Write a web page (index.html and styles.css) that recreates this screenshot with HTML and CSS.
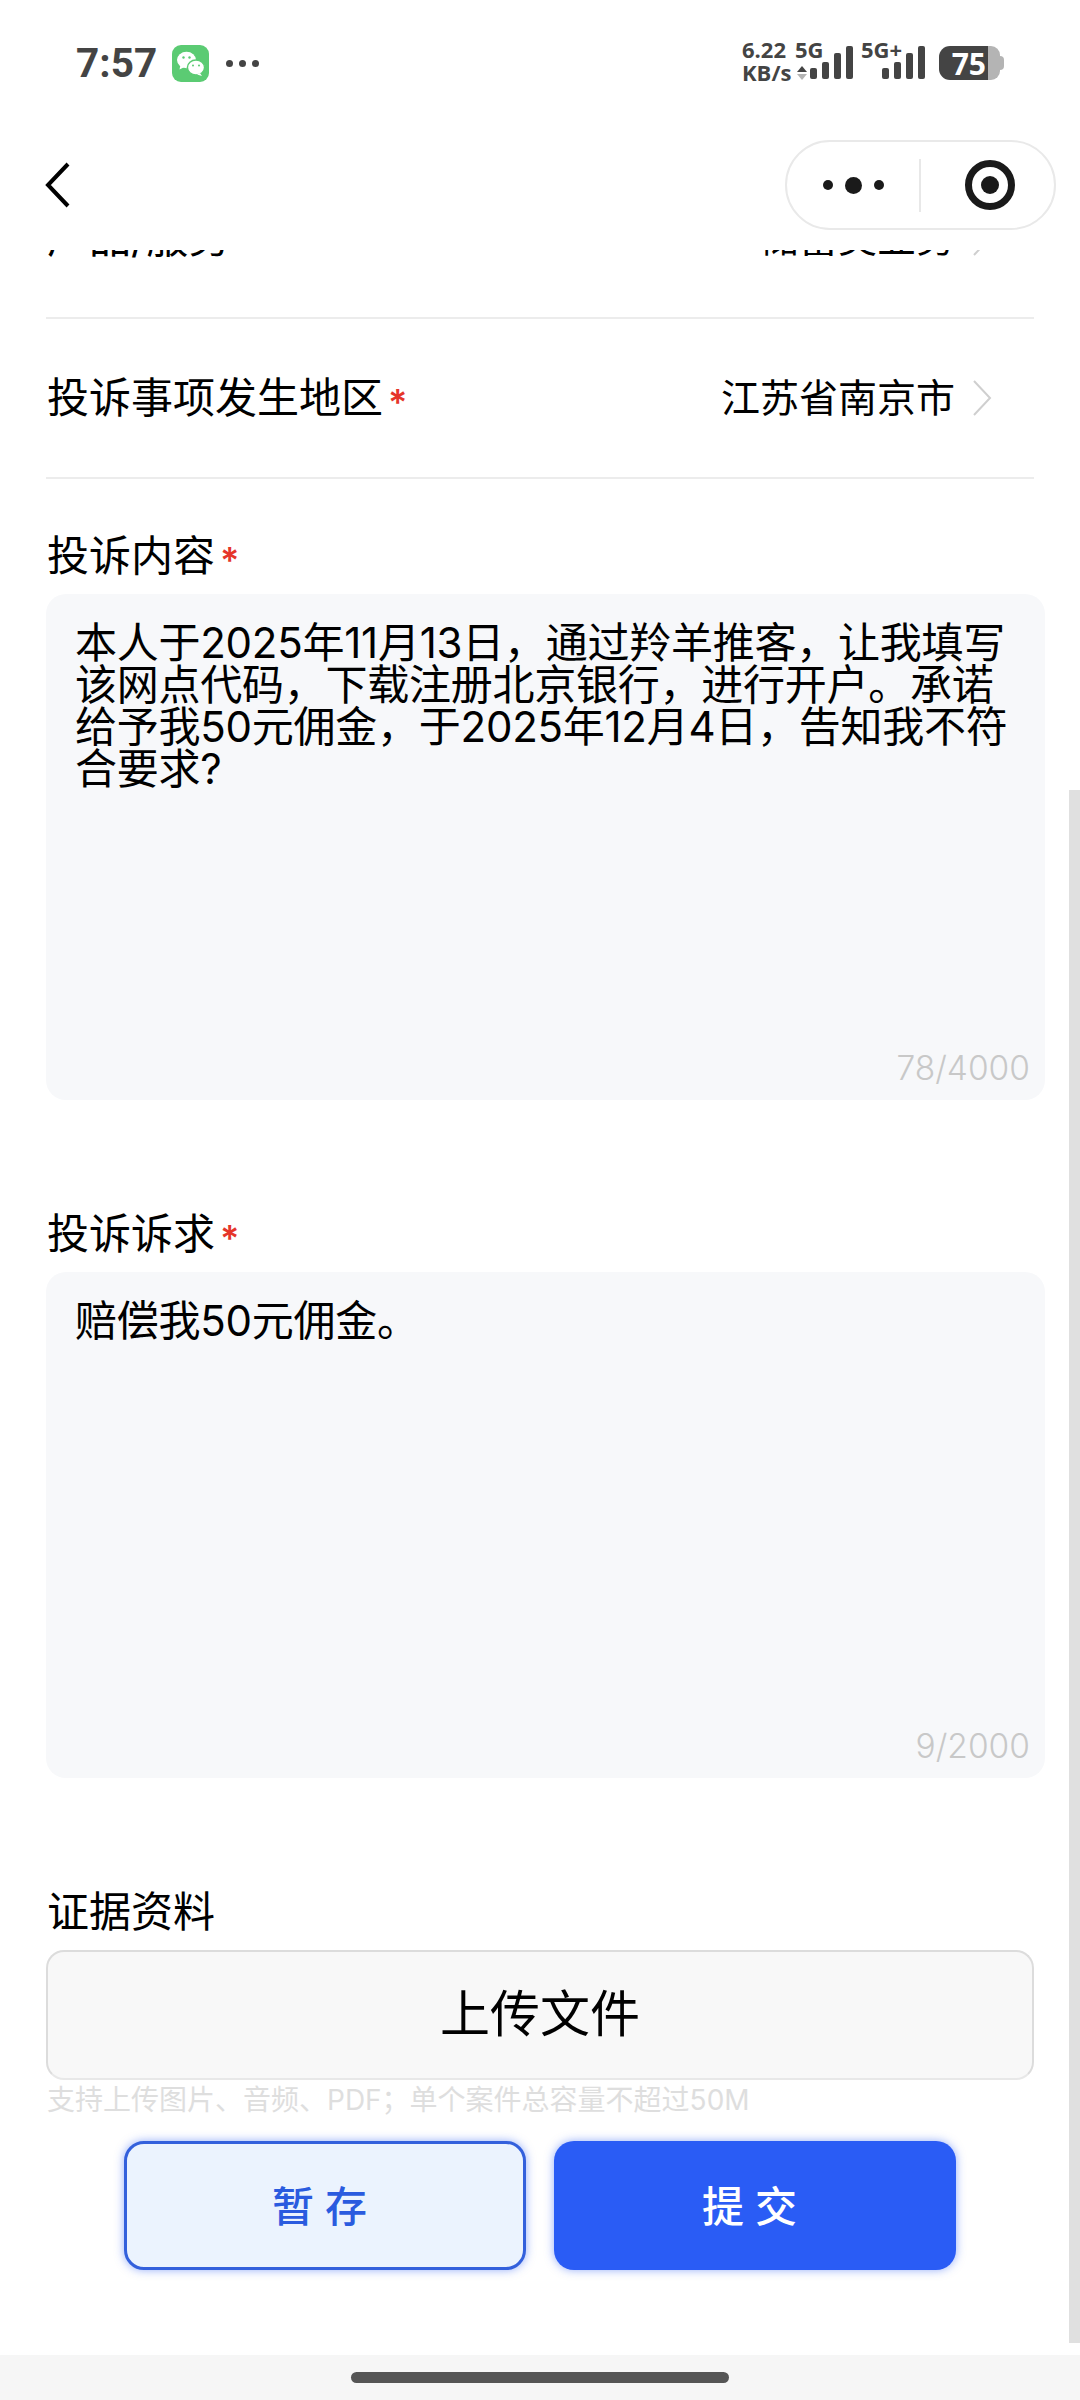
FILE: index.html
```html
<!DOCTYPE html>
<html lang="zh-CN">
<head>
    <meta charset="UTF-8">
    <meta name="viewport" content="width=device-width, initial-scale=1.0">
    <title>投诉</title>
    <link rel="stylesheet" href="styles.css">
</head>
<body>
    <div class="page">
        <div class="status-bar">
            <span class="status-time">7:57</span>
            <svg class="status-wechat" width="37" height="37" viewBox="0 0 37 37">
                <rect width="37" height="37" rx="9" fill="#5bcb73"/>
                <ellipse cx="14.5" cy="15" rx="9.5" ry="8.2" fill="#fff"/>
                <path d="M8.5 20l-1 4.5 5-2.5z" fill="#fff"/>
                <ellipse cx="24" cy="22.5" rx="8.6" ry="7.4" fill="#fff" stroke="#5bcb73" stroke-width="1.5"/>
                <path d="M28 28l2 3-5-1.5z" fill="#fff"/>
                <circle cx="11.5" cy="12.5" r="1.2" fill="#5bcb73"/>
                <circle cx="17.5" cy="12.5" r="1.2" fill="#5bcb73"/>
                <circle cx="21" cy="20.5" r="1" fill="#5bcb73"/>
                <circle cx="27" cy="20.5" r="1" fill="#5bcb73"/>
            </svg>
            <div class="status-dots"><i></i><i></i><i></i></div>
            <div class="status-right">
                <div class="status-speed">
                    <span>6.22</span>
                    <span>KB/s</span>
                </div>
                <div class="status-net">
                    <span class="status-gen">5G</span>
                    <svg class="status-arrows" width="10" height="14" viewBox="0 0 10 14">
                        <path d="M5 0l5 6H0z" fill="#444"/>
                        <path d="M5 14l5-6H0z" fill="#b4b4b4"/>
                    </svg>
                </div>
                <div class="signal">
                    <i class="signal-1"></i><i class="signal-2"></i><i class="signal-3"></i><i class="signal-4"></i>
                </div>
                <div class="status-net status-net-plus">
                    <span class="status-gen">5G+</span>
                </div>
                <div class="signal">
                    <i class="signal-1"></i><i class="signal-2"></i><i class="signal-3"></i><i class="signal-4"></i>
                </div>
                <div class="battery">
                    <div class="battery-level">75</div>
                    <div class="battery-rest"></div>
                    <div class="battery-nub"></div>
                </div>
            </div>
        </div>

        <div class="nav-bar">
            <svg class="nav-back" width="25" height="46" viewBox="0 0 25 46">
                <path d="M23 2L3 23l20 21" fill="none" stroke="#000" stroke-width="4"/>
            </svg>
            <div class="capsule">
                <div class="capsule-more"><i></i><i class="capsule-more-big"></i><i></i></div>
                <div class="capsule-line"></div>
                <svg class="capsule-target" width="52" height="52" viewBox="0 0 52 52">
                    <circle cx="26" cy="26" r="21.5" fill="none" stroke="#1a1a1a" stroke-width="7"/>
                    <circle cx="26" cy="26" r="9" fill="#1a1a1a"/>
                </svg>
            </div>
        </div>

        <div class="scroll-area">
            <div class="form">
                <div class="form-row">
                    <span class="form-row-name">产品/服务</span>
                    <div class="form-row-value">
                        <span>储蓄类业务</span>
                        <svg class="chevron" width="20" height="36" viewBox="0 0 20 36"><path d="M2 1l16 17L2 35" fill="none" stroke="#cfcfcf" stroke-width="2"/></svg>
                    </div>
                </div>
                <div class="form-row">
                    <span class="form-row-name">投诉事项发生地区<span class="required">*</span></span>
                    <div class="form-row-value">
                        <span>江苏省南京市</span>
                        <svg class="chevron" width="20" height="36" viewBox="0 0 20 36"><path d="M2 1l16 17L2 35" fill="none" stroke="#cfcfcf" stroke-width="2"/></svg>
                    </div>
                </div>

                <div class="field-label field-label-first">投诉内容<span class="required">*</span></div>
                <div class="text-box">
                    <div class="text-box-content">本人于2025年11月13日，通过羚羊推客，让我填写该网点代码，下载注册北京银行，进行开户。承诺给予我50元佣金，于2025年12月4日，告知我不符合要求?</div>
                    <div class="text-box-count">78/4000</div>
                </div>

                <div class="field-label">投诉诉求<span class="required">*</span></div>
                <div class="text-box">
                    <div class="text-box-content">赔偿我50元佣金。</div>
                    <div class="text-box-count">9/2000</div>
                </div>

                <div class="field-label">证据资料</div>
                <div class="upload">上传文件</div>
                <div class="upload-hint">支持上传图片、音频、PDF；单个案件总容量不超过50M</div>

                <div class="actions">
                    <button class="btn btn-save">暂存</button>
                    <button class="btn btn-submit">提交</button>
                </div>
            </div>
            <div class="scrollbar"></div>
        </div>

        <div class="home-bar"><div class="home-pill"></div></div>
    </div>
</body>
</html>
```

FILE: styles.css
```css
*, *:before, *:after {
    box-sizing: border-box;
}

html, body {
    margin: 0;
    padding: 0;
    background: #fff;
}

.page {
    display: flex;
    flex-direction: column;
    width: 1080px;
    height: 2400px;
    overflow: hidden;
    font-family: Inter, "Noto Sans CJK SC", sans-serif;
    color: #000;
}

/* status bar */
.status-bar {
    display: flex;
    align-items: center;
    height: 126px;
    padding: 0 0 0 76px;
    color: #444;
}

.status-time {
    font-family: Roboto, sans-serif;
    font-size: 40.5px;
    font-weight: 700;
    line-height: 42px;
    width: 96px;
}

.status-dots {
    display: flex;
    gap: 6px;
    margin-left: 17px;
}

.status-dots i {
    width: 7px;
    height: 7px;
    border-radius: 50%;
    background: #444;
}

.status-right {
    display: flex;
    align-items: flex-end;
    height: 38px;
    margin-left: auto;
    margin-right: 76px;
    margin-bottom: 4px;
    font-family: "Open Sans", sans-serif;
    font-weight: 700;
    font-size: 22px;
    line-height: 23px;
}

.status-speed {
    display: flex;
    flex-direction: column;
    align-self: flex-start;
    width: 53px;
    margin-top: -4px;
}

.status-net {
    display: flex;
    flex-direction: column;
    align-items: flex-start;
    align-self: flex-start;
    width: 15px;
    margin-top: -4px;
}

.status-arrows {
    flex: none;
    margin: 5px 0 0 2px;
}

.status-net-plus {
    width: 21px;
    margin-left: 8px;
}

.signal {
    display: flex;
    align-items: flex-end;
    gap: 5px;
    height: 33px;
    margin-bottom: 1px;
}

.signal i {
    width: 7px;
    border-radius: 2px;
    background: #444;
}

.signal-1 { height: 11px; }
.signal-2 { height: 17px; }
.signal-3 { height: 26px; }
.signal-4 { height: 33px; }

.battery {
    display: flex;
    align-items: center;
    height: 34px;
    margin-left: 14px;
}

.battery-level {
    display: flex;
    align-items: center;
    justify-content: flex-end;
    width: 49px;
    height: 34px;
    padding-right: 2px;
    border-radius: 11px 0 0 11px;
    background: #444;
    color: #fff;
    font-size: 30px;
    font-weight: 700;
}

.battery-rest {
    width: 12px;
    height: 34px;
    border-radius: 0 9px 9px 0;
    background: #b4b4b4;
}

.battery-nub {
    width: 4px;
    height: 14px;
    border-radius: 0 4px 4px 0;
    background: #b4b4b4;
}

.status-wechat {
    flex: none;
}

/* nav bar */
.nav-bar {
    display: flex;
    align-items: center;
    justify-content: space-between;
    height: 124px;
    padding: 0 24px 6px 45px;
}

.capsule {
    display: flex;
    align-items: center;
    width: 271px;
    height: 90px;
    border: 2px solid #e9e9e9;
    border-radius: 45px;
}

.capsule-more {
    display: flex;
    align-items: center;
    gap: 12px;
    margin-left: 36px;
}

.capsule-more i {
    width: 10px;
    height: 10px;
    border-radius: 50%;
    background: #1a1a1a;
}

.capsule-more i.capsule-more-big {
    width: 17px;
    height: 17px;
}

.capsule-line {
    width: 2px;
    height: 53px;
    margin-left: 35px;
    background: #e8e8e8;
}

.capsule-target {
    margin-left: 43px;
}

/* scrolled form */
.scroll-area {
    position: relative;
    flex: 1;
    overflow: hidden;
}

.form {
    margin-top: -91px;
    padding: 0 46px;
}

.form-row {
    display: flex;
    align-items: center;
    justify-content: space-between;
    width: 988px;
    height: 160px;
    border-bottom: 2px solid #ececec;
    font-size: 42px;
    line-height: 42px;
}

.form-row-name {
    display: flex;
    align-items: center;
    padding-left: 1px;
}

.form-row-value {
    display: flex;
    align-items: center;
    gap: 17px;
    padding-right: 42px;
    font-size: 39px;
}

.required {
    margin-left: 5px;
    color: #e5352a;
    font-size: 36px;
    font-weight: 600;
    line-height: 36px;
    position: relative;
    top: 4px;
}

.field-label {
    display: flex;
    align-items: center;
    height: 42px;
    margin-top: 113px;
    padding-left: 1px;
    font-size: 42px;
    line-height: 42px;
}

.field-label-first {
    margin-top: 56px;
}

.text-box {
    display: flex;
    flex-direction: column;
    justify-content: space-between;
    width: 999px;
    height: 506px;
    margin-top: 17px;
    padding: 28px 15px 12px 29px;
    border-radius: 20px;
    background: #f7f8fa;
}

.text-box-content {
    width: 940px;
    font-size: 42px;
    letter-spacing: -0.25px;
    line-height: 42px;
}

.text-box-count {
    align-self: flex-end;
    color: #c8c8c8;
    font-size: 33.5px;
    font-weight: 300;
    line-height: 40px;
}

.upload {
    display: flex;
    align-items: center;
    justify-content: center;
    width: 988px;
    height: 130px;
    margin-top: 17px;
    padding-bottom: 2px;
    border: 2px solid #dcdcdc;
    border-bottom-color: #e8e8e8;
    border-radius: 18px;
    background: #f8f8f8;
    font-size: 50px;
    line-height: 50px;
}

.upload-hint {
    margin-top: 6px;
    padding-left: 1px;
    color: #dedede;
    font-size: 28px;
    line-height: 28px;
}

.actions {
    display: flex;
    gap: 28px;
    margin: 27px 0 0 78px;
}

.btn {
    width: 402px;
    height: 129px;
    padding: 0 0 4px;
    border-radius: 20px;
    font-family: inherit;
    font-size: 42px;
    font-weight: 500;
    letter-spacing: 11px;
    box-shadow: 0 0 10px rgba(41, 91, 245, 0.5);
}

.btn-save {
    border: 3px solid #3360dc;
    background: #ebf3fe;
    color: #2a5bdf;
}

.btn-submit {
    border: 0;
    background: #2a5cf5;
    color: #fff;
}

.scrollbar {
    position: absolute;
    top: 540px;
    right: 0;
    width: 11px;
    height: 1553px;
    background: #e0e0e0;
}

/* bottom gesture area */
.home-bar {
    display: flex;
    justify-content: center;
    height: 45px;
    padding-top: 17px;
    background: #f6f6f6;
}

.home-pill {
    width: 378px;
    height: 11px;
    border-radius: 6px;
    background: #555;
}
```
